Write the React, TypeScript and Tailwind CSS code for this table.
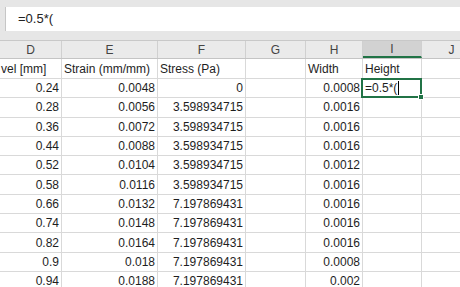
const cols = [
  { key: 'D', w: 62 },
  { key: 'E', w: 96 },
  { key: 'F', w: 88 },
  { key: 'G', w: 60 },
  { key: 'H', w: 57 },
  { key: 'I', w: 59 },
  { key: 'J', w: 60 },
];

const dVals = ['0.24', '0.28', '0.36', '0.44', '0.52', '0.58', '0.66', '0.74', '0.82', '0.9', '0.94'];
const eVals = ['0.0048', '0.0056', '0.0072', '0.0088', '0.0104', '0.0116', '0.0132', '0.0148', '0.0164', '0.018', '0.0188'];
const fVals = ['0', '3.598934715', '3.598934715', '3.598934715', '3.598934715', '3.598934715', '7.197869431', '7.197869431', '7.197869431', '7.197869431', '7.197869431'];
const hVals = ['0.0008', '0.0016', '0.0016', '0.0016', '0.0012', '0.0016', '0.0016', '0.0016', '0.0016', '0.0008', '0.002'];

function Cell({ w, right, children, active }: { w: number; right?: boolean; children?: React.ReactNode; active?: boolean }) {
  return (
    <div
      className={`relative shrink-0 h-full flex items-center border-r border-[#d9d9d9] overflow-visible whitespace-nowrap ${right ? 'justify-end pr-[2px]' : 'pl-[2px]'}`}
      style={{ width: w }}
    >
      {children}
      {active && (
        <div className="absolute -left-[2px] -top-[1px] -right-[1px] -bottom-[1px] border-2 border-[#217346] z-10">
          <div className="absolute -right-[4px] -bottom-[4px] w-[6px] h-[6px] bg-[#217346] border border-white" />
        </div>
      )}
    </div>
  );
}

export default function App() {
  return (
    <div
      className="w-[460px] h-[287px] overflow-hidden bg-white text-[#1e1e1e] text-[12px]"
      style={{ fontFamily: '"Liberation Sans", Arial, sans-serif' }}
    >
      {/* formula bar */}
      <div className="h-[41px] bg-[#e6e6e6] pt-[7px] pl-[5px] border-b border-[#c8c8c8]">
        <div className="h-[24px] bg-white border-l border-[#c6c6c6] flex items-center pl-[12px] text-[13px] text-[#222]">
          =0.5*(
        </div>
      </div>

      {/* column headers */}
      <div className="h-[18px] flex bg-[#eaeaea] border-b border-[#c4c4c4] text-[#444] text-[12px]">
        {cols.map((c) => (
          <div
            key={c.key}
            className={`shrink-0 h-full flex items-center justify-center border-r border-[#d0d0d0] ${c.key === 'I' ? 'bg-[#d2d2d2] border-b-2 border-b-[#217346]' : ''}`}
            style={{ width: c.w }}
          >
            {c.key}
          </div>
        ))}
      </div>

      {/* first row of titles */}
      <div className="h-[20px] flex border-b border-[#d9d9d9]">
        <Cell w={62}><span className="-ml-[1px]">vel [mm]</span></Cell>
        <Cell w={96}>Strain (mm/mm)</Cell>
        <Cell w={88}>Stress (Pa)</Cell>
        <Cell w={60} />
        <Cell w={57}>Width</Cell>
        <Cell w={59}>Height</Cell>
        <Cell w={60} />
      </div>

      {dVals.map((d, i) => (
        <div key={i} className="h-[19.3px] flex border-b border-[#d9d9d9]">
          <Cell w={62} right>{d}</Cell>
          <Cell w={96} right>{eVals[i]}</Cell>
          <Cell w={88} right>{fVals[i]}</Cell>
          <Cell w={60} />
          <Cell w={57} right>{hVals[i]}</Cell>
          <Cell w={59} active={i === 0}>
            {i === 0 && (
              <span className="relative z-20 flex items-center">
                =0.5*(
                <span className="ml-[1px] w-[1px] h-[14px] bg-black" />
              </span>
            )}
          </Cell>
          <Cell w={60} />
        </div>
      ))}
    </div>
  );
}
